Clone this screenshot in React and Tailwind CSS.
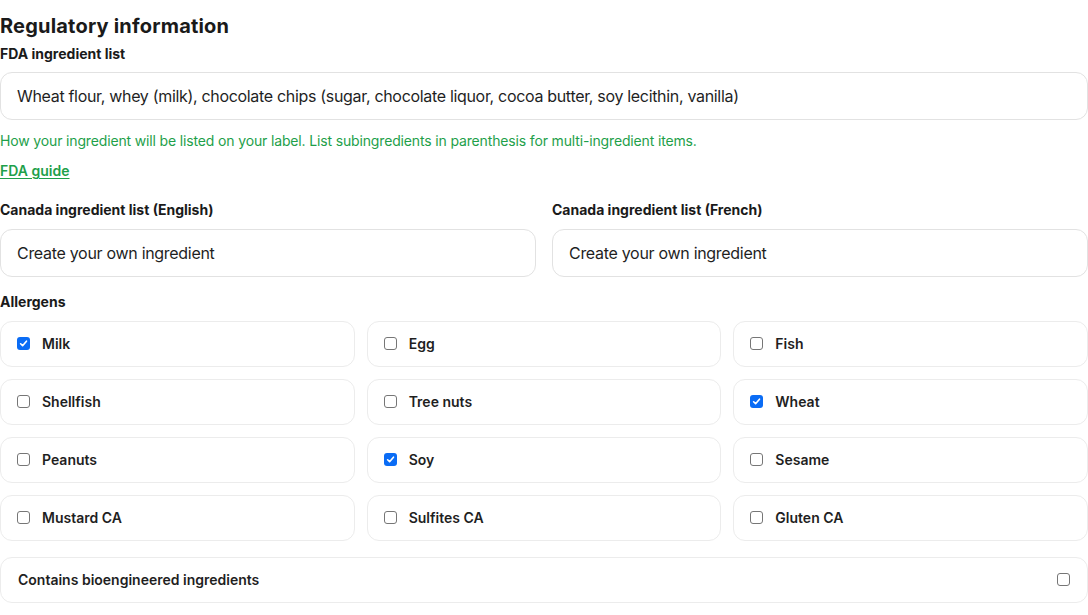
import { useState } from "react";

const allergens = [
  { name: "Milk", checked: true },
  { name: "Egg", checked: false },
  { name: "Fish", checked: false },
  { name: "Shellfish", checked: false },
  { name: "Tree nuts", checked: false },
  { name: "Wheat", checked: true },
  { name: "Peanuts", checked: false },
  { name: "Soy", checked: true },
  { name: "Sesame", checked: false },
  { name: "Mustard CA", checked: false },
  { name: "Sulfites CA", checked: false },
  { name: "Gluten CA", checked: false },
];

function Checkbox({ checked, onChange }) {
  return (
    <span
      onClick={onChange}
      className={
        "flex h-[13px] w-[13px] shrink-0 items-center justify-center rounded-[3px] " +
        (checked ? "bg-[#0a6cf5]" : "border border-[#767676] bg-white")
      }
    >
      {checked && (
        <svg width="9" height="9" viewBox="0 0 10 10" fill="none">
          <path d="M1.8 5.3 L4 7.4 L8.3 2.4" stroke="white" strokeWidth="1.8" strokeLinecap="round" strokeLinejoin="round" />
        </svg>
      )}
    </span>
  );
}

export default function App() {
  const [checks, setChecks] = useState(allergens.map((a) => a.checked));
  const [bio, setBio] = useState(false);

  const toggle = (i) => setChecks((c) => c.map((v, j) => (j === i ? !v : v)));

  return (
    <div className="w-[1088px] bg-white text-[#1a1a1a] font-['Inter','Liberation_Sans',sans-serif]">
      <h1 className="pt-[12px] text-[20px] font-bold leading-[28px] tracking-[0.2px]">Regulatory information</h1>

      <label className="mt-[4px] block text-[14px] font-bold leading-[20px]">FDA ingredient list</label>
      <div className="mt-[8px] flex h-[48px] items-center rounded-[12px] border border-[#e2e2e2] px-[16px] text-[16px] tracking-[-0.32px] text-[#1f1f1f]">
        Wheat flour, whey (milk), chocolate chips (sugar, chocolate liquor, cocoa butter, soy lecithin, vanilla)
      </div>
      <p className="mt-[11px] text-[14px] leading-[20px] tracking-[-0.15px] text-[#1ea04a]">
        How your ingredient will be listed on your label. List subingredients in parenthesis for multi-ingredient items.
      </p>
      <a href="#" className="mt-[10px] block text-[14px] font-semibold leading-[20px] text-[#1ea04a] underline underline-offset-2">
        FDA guide
      </a>

      <div className="mt-[19px] grid grid-cols-2 gap-x-[16px]">
        <div>
          <label className="block text-[14px] font-bold leading-[20px]">Canada ingredient list (English)</label>
          <div className="mt-[9px] flex h-[48px] items-center rounded-[12px] border border-[#e2e2e2] px-[16px] text-[16px] tracking-[-0.3px] text-[#1f1f1f]">
            Create your own ingredient
          </div>
        </div>
        <div>
          <label className="block text-[14px] font-bold leading-[20px]">Canada ingredient list (French)</label>
          <div className="mt-[9px] flex h-[48px] items-center rounded-[12px] border border-[#e2e2e2] px-[16px] text-[16px] tracking-[-0.3px] text-[#1f1f1f]">
            Create your own ingredient
          </div>
        </div>
      </div>

      <label className="mt-[15px] block text-[14px] font-bold leading-[20px]">Allergens</label>
      <div className="mt-[9px] grid grid-cols-3 gap-x-[12px] gap-y-[12px]">
        {allergens.map((a, i) => (
          <div
            key={a.name}
            className="flex h-[46px] items-center gap-[12px] rounded-[12px] border border-[#ececec] px-[16px] pb-[1px]"
          >
            <Checkbox checked={checks[i]} onChange={() => toggle(i)} />
            <span className="text-[14px] font-semibold text-[#1f1f1f]">{a.name}</span>
          </div>
        ))}
      </div>

      <div className="mt-[16px] flex h-[46px] items-center justify-between rounded-[12px] border border-[#ececec] px-[17px] pb-[1px]">
        <span className="text-[14px] font-semibold text-[#1f1f1f]">Contains bioengineered ingredients</span>
        <Checkbox checked={bio} onChange={() => setBio(!bio)} />
      </div>
    </div>
  );
}
